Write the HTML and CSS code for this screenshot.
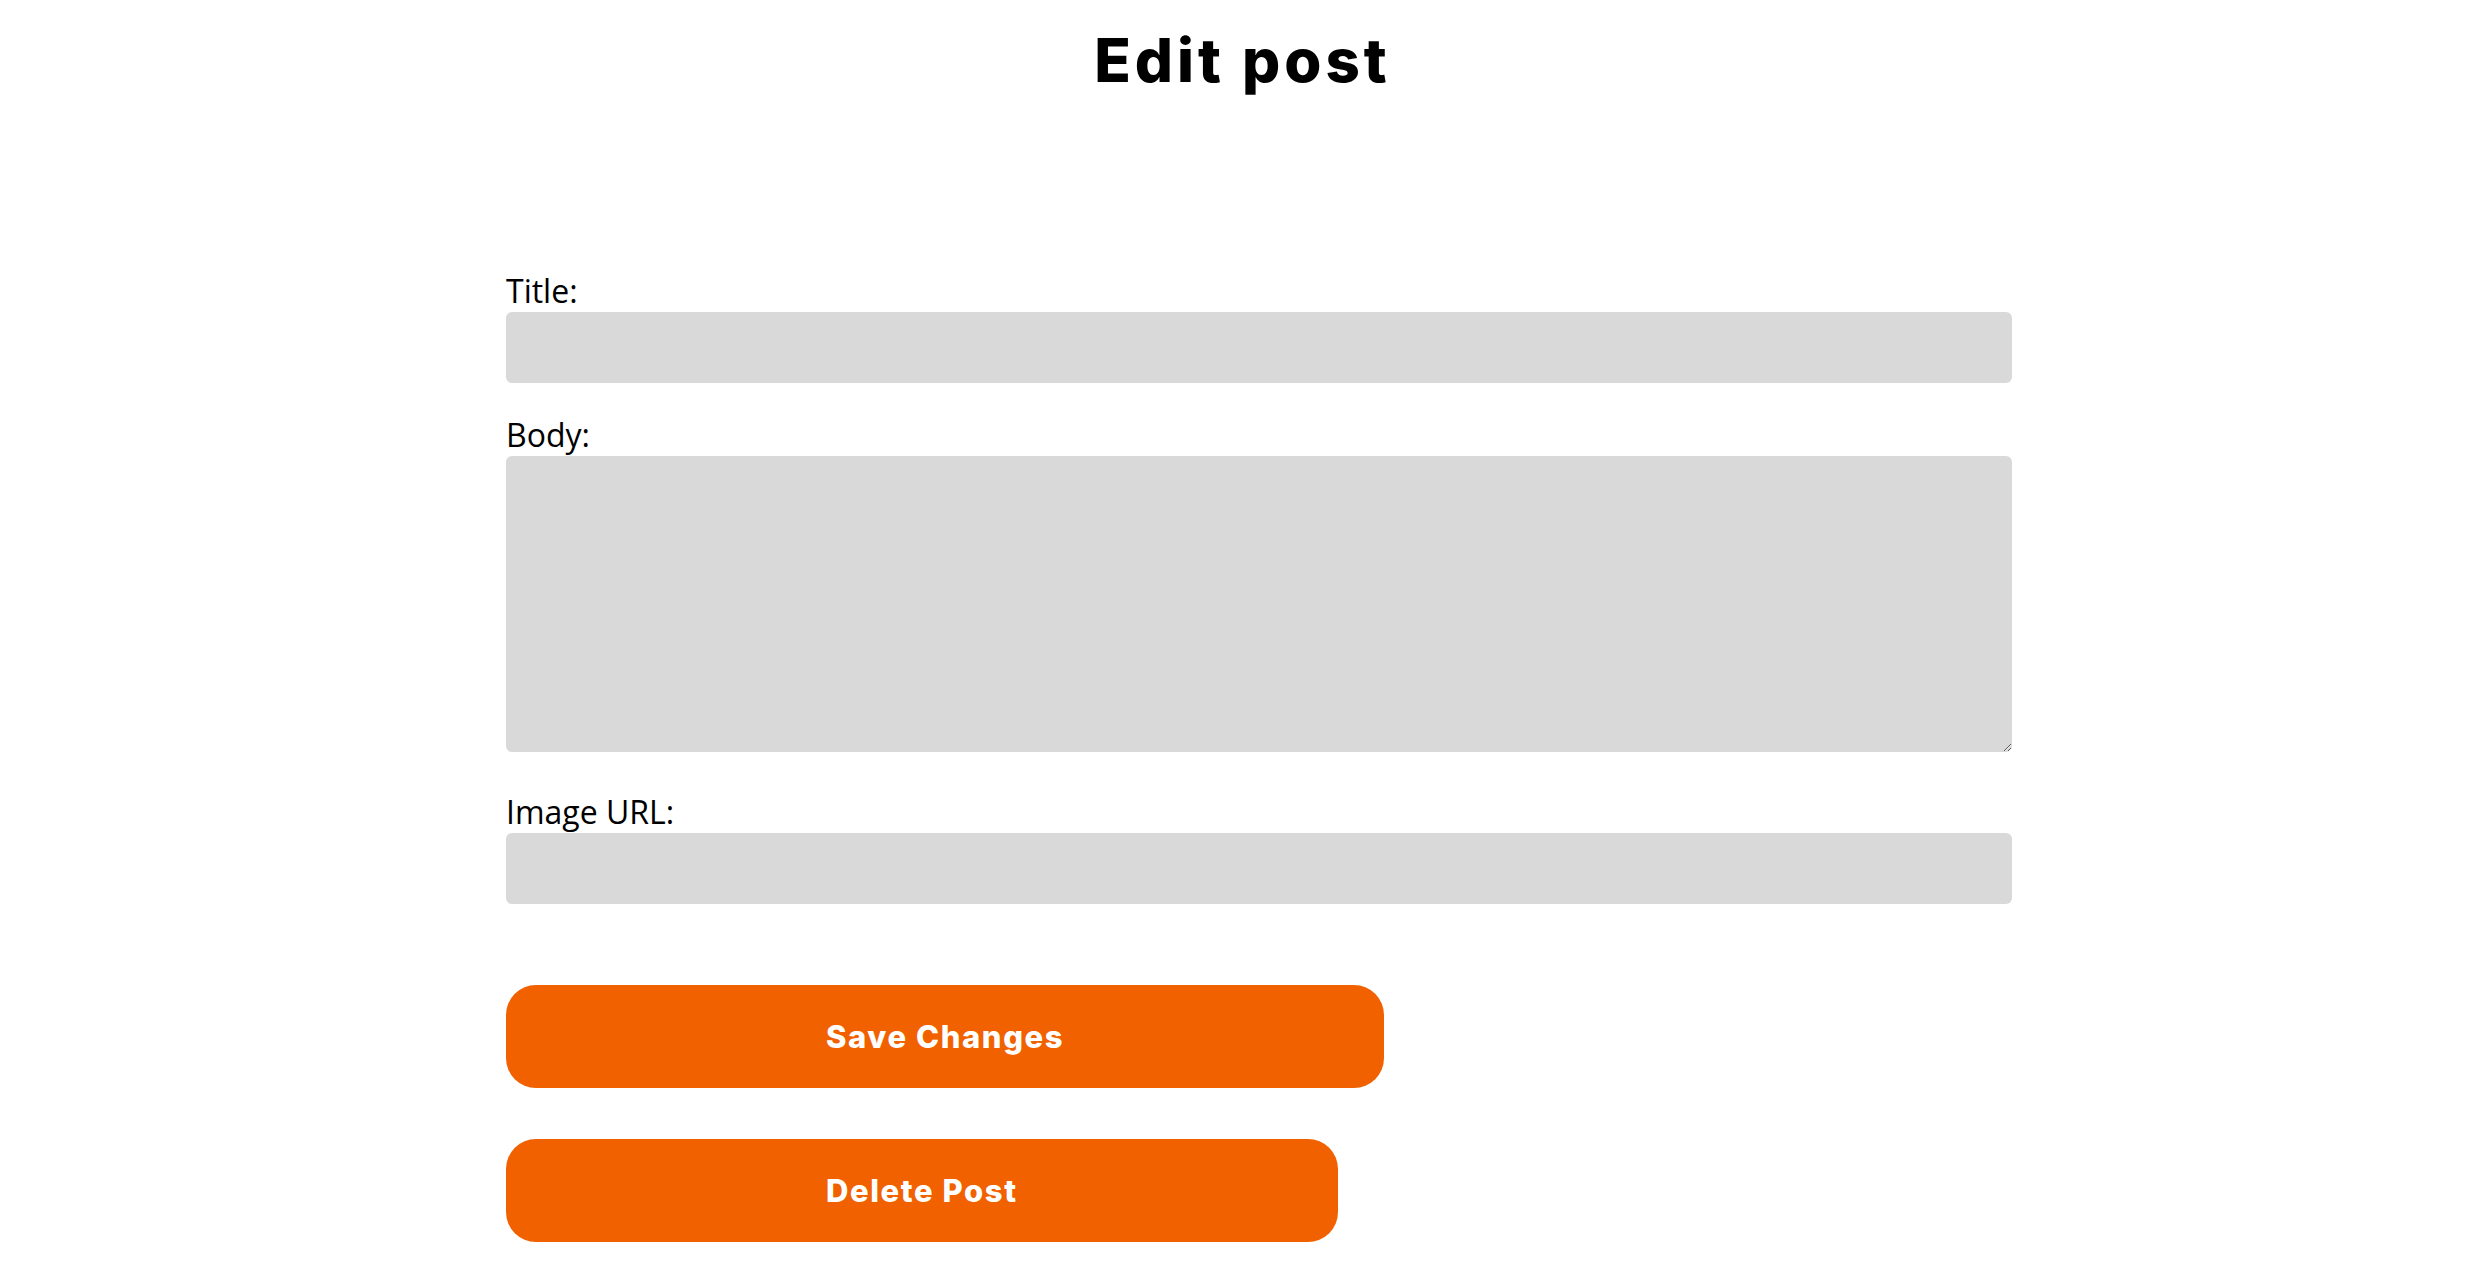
FILE: index.html
```html
<!DOCTYPE html>
<html lang="en">
<head>
<meta charset="utf-8">
<title>Edit post</title>
<link rel="stylesheet" href="styles.css">
</head>
<body>
<h1 class="page-title">Edit post</h1>
<form class="post-form">
  <label class="field-label" for="title">Title:</label>
  <input class="field-input" id="title" type="text">
  <label class="field-label" for="body">Body:</label>
  <textarea class="field-textarea" id="body"></textarea>
  <label class="field-label" for="image">Image URL:</label>
  <input class="field-input" id="image" type="text">
  <div class="actions">
    <button class="btn" type="submit">Save Changes</button>
    <button class="btn" type="button">Delete Post</button>
  </div>
</form>
</body>
</html>
```
FILE: styles.css
```css
body {
  margin: 0;
  font-family: "Open Sans", sans-serif;
  background: #ffffff;
  color: #000000;
}

.page-title {
  margin: 24px 0 0;
  text-align: center;
  font-family: Inter, sans-serif;
  font-weight: 800;
  font-size: 60px;
  line-height: 72px;
  letter-spacing: 4px;
  text-indent: 4px;
}

.post-form {
  width: 1469px;
  margin: 173px auto 0;
}

.field-label {
  display: block;
  font-size: 32px;
}

.field-input,
.field-textarea {
  display: block;
  width: 100%;
  box-sizing: content-box;
  padding: 0 18.5px;
  border: none;
  border-radius: 6px;
  background: #d9d9d9;
  font-family: "Open Sans", sans-serif;
  font-size: 24px;
}

.field-input {
  height: 71px;
  margin-bottom: 30px;
}

.field-textarea {
  height: 296px;
  margin-bottom: 38px;
  padding-top: 0;
  padding-bottom: 0;
}

.actions {
  display: flex;
  flex-direction: column;
  align-items: flex-start;
  gap: 51px;
  margin-top: 81px;
}

.btn {
  height: 103px;
  padding: 0 320px;
  border: none;
  border-radius: 30px;
  background: #f16100;
  color: #ffffff;
  font-family: Inter, sans-serif;
  font-weight: 800;
  font-size: 31px;
  letter-spacing: 1.6px;
  cursor: pointer;
}
```
